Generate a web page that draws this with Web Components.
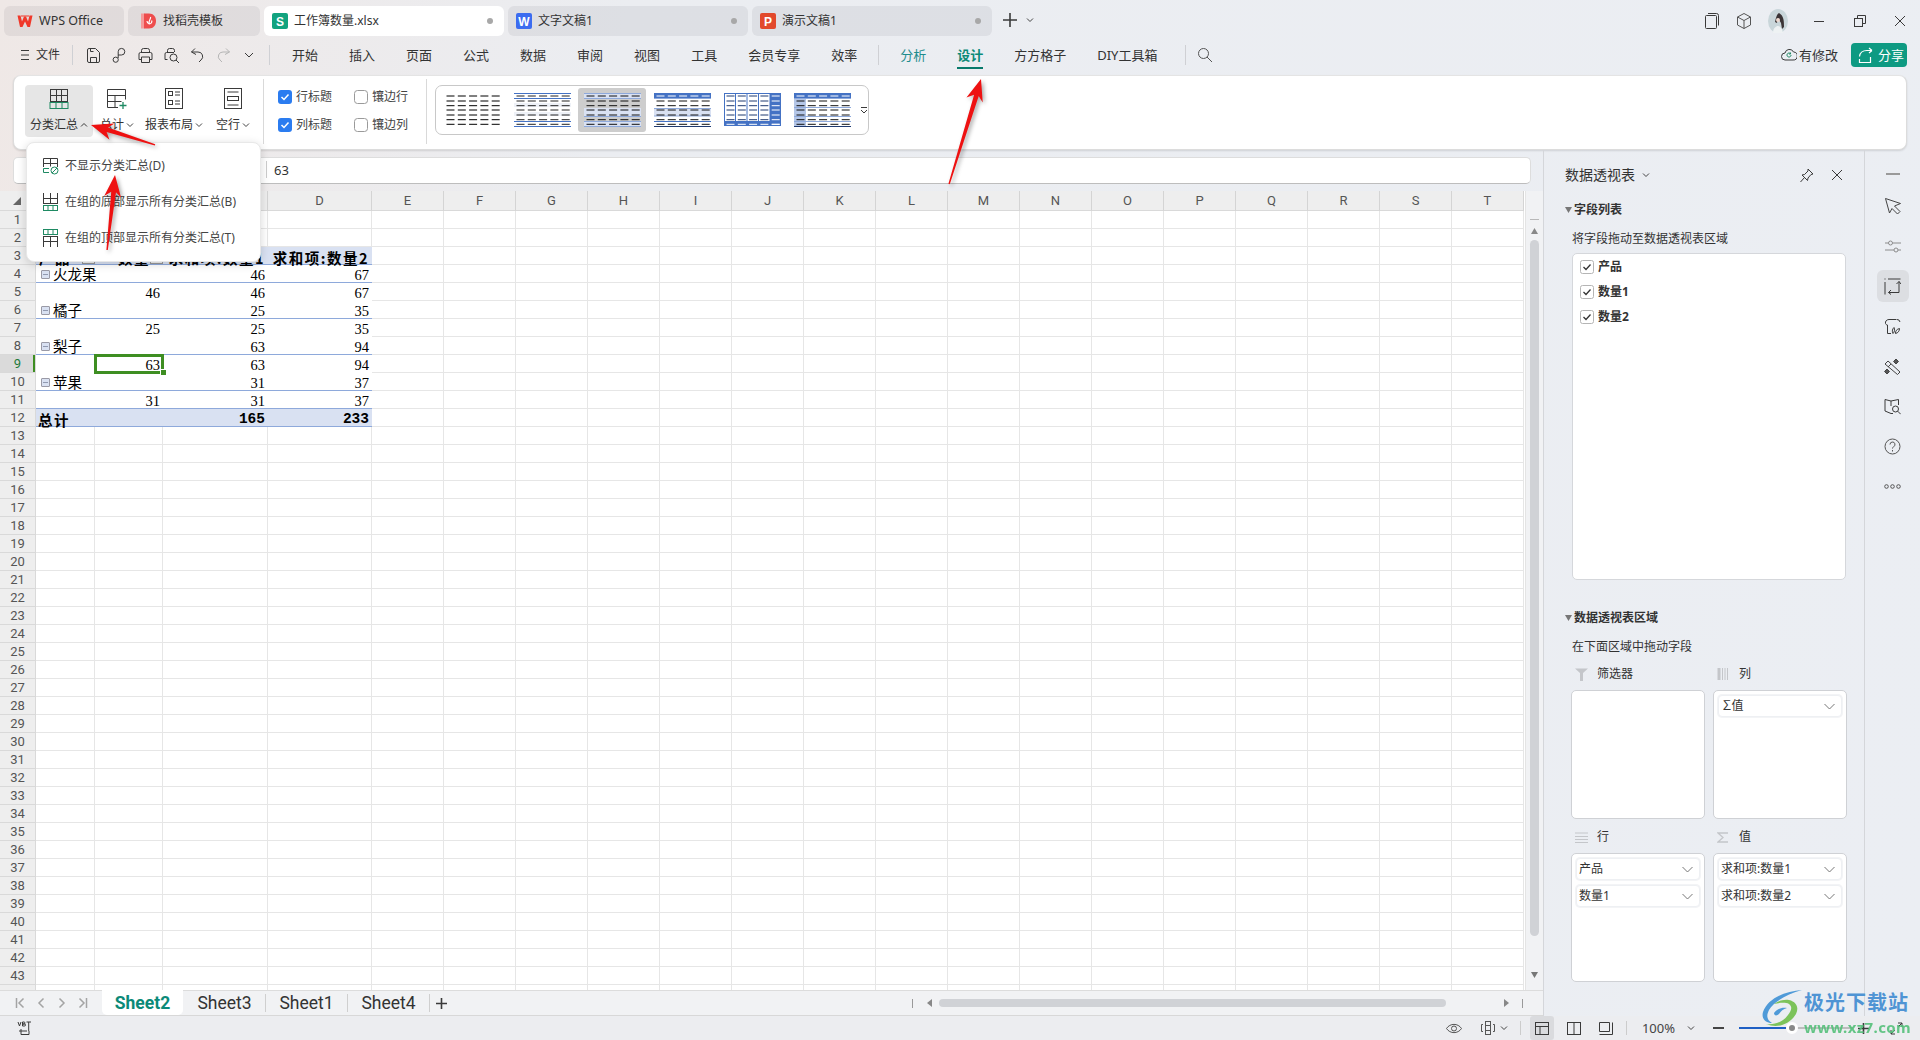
<!DOCTYPE html>
<html lang="zh">
<head>
<meta charset="utf-8">
<title>工作簿数量.xlsx</title>
<style>
  html, body { margin: 0; padding: 0; }
  body {
    width: 1920px;
    height: 1040px;
    overflow: hidden;
    position: relative;
    display: flex;
    flex-direction: column;
    font-family: "Noto Sans", "Noto Sans CJK SC", sans-serif;
    font-size: 12px;
    line-height: 16px;
    color: #333;
    background: linear-gradient(100deg, #efe8e6 0, #ebedf1 30%, #ebeef3 100%);
  }
  .work { display: flex; flex: 1; min-height: 0; }
  .left { display: flex; flex-direction: column; width: 1543px; }
</style>
</head>
<body>
<title-bar></title-bar>
<menu-bar></menu-bar>
<design-ribbon></design-ribbon>
<div class="work">
  <div class="left">
    <formula-bar></formula-bar>
    <sheet-grid></sheet-grid>
    <sheet-tabs></sheet-tabs>
  </div>
  <pivot-panel></pivot-panel>
  <side-rail></side-rail>
</div>
<status-bar></status-bar>
<subtotal-menu></subtotal-menu>
<red-arrows></red-arrows>
<water-mark></water-mark>

<script>
// small svg helper, everything is 1px line icons
function ic(w, h, body, color) {
  return `<svg width="${w}" height="${h}" viewBox="0 0 ${w} ${h}" fill="none" stroke="${color || '#3a3a3a'}" stroke-width="1" style="display:block;flex:none">${body}</svg>`;
}
const chev = (c) => ic(8, 6, '<path d="M1 1.500l3 3 3-3"/>', c || '#444');
const GREEN = '#1f8a63';

class DocTab extends HTMLElement {
  constructor() {
    super();
    const shadowRoot = this.attachShadow({ mode: 'open' });
    const active = this.hasAttribute('active');
    const w = this.getAttribute('w');
    const pad = this.getAttribute('pad') || 7;
    const dot = this.hasAttribute('dot') ? '<span class="dot"></span>' : '';
    shadowRoot.innerHTML = `
      <style>
        :host { display: flex; align-items: center; height: 30px; width: ${w}px; box-sizing: border-box;
          padding: 0 11px 0 ${pad}px; border-radius: 6px; background: ${active ? '#fff' : 'rgba(60,60,70,.075)'}; }
        .logo { width: 18px; height: 18px; margin-right: 5px; flex: none; }
        .t { flex: 1; white-space: nowrap; font-size: ${this.getAttribute('fs') || 12}px; color: #333; }
        .dot { width: 6px; height: 6px; border-radius: 50%; background: #a8a8a8; }
      </style>
      <span class="logo"><slot name="logo"></slot></span><span class="t"><slot></slot></span>${dot}`;
  }
}
customElements.define('doc-tab', DocTab);

class TitleBar extends HTMLElement {
  constructor() {
    super();
    const shadowRoot = this.attachShadow({ mode: 'open' });
    const letter = (bg, l) => `<svg slot="logo" width="18" height="18" viewBox="0 0 18 18"><rect x="1" y="1" width="16" height="16" rx="2" fill="${bg}"/><text x="9" y="14" font-family="Liberation Sans" font-size="12" font-weight="700" fill="#fff" text-anchor="middle">${l}</text></svg>`;
    shadowRoot.innerHTML = `
      <style>
        :host { display: flex; height: 40px; box-sizing: border-box; padding: 6px 0 4px 4px; gap: 4px; align-items: flex-start; }
        .plus { margin: 6px 0 0 6px; display: flex; align-items: center; gap: 8px; }
        .right { margin-left: auto; display: flex; align-items: center; height: 30px; }
        .right span { display: flex; justify-content: center; align-items: center; }
      </style>
      <doc-tab w="120" pad="12" fs="12.5"><svg slot="logo" width="18" height="18" viewBox="0 0 18 18"><path d="M1.500 3.500h3l1.500 6 2-5h2l2 5 1.500-6h3L14 15h-2.500L9 9.500 6.500 15H4z" fill="#f0382a"/><path d="M5 4h8" stroke="#f0382a" stroke-width="1"/></svg>WPS Office</doc-tab>
      <doc-tab w="132" pad="12"><svg slot="logo" width="18" height="18" viewBox="0 0 18 18"><path d="M1 1.500h3.500v15H1z" fill="#f59a9a"/><path d="M4 1.500h5c4.500 0 7 3.200 7 7.500s-2.500 7.500-7 7.500H4z" fill="#ee4d4d"/><path d="M10.500 5c.8 2-2.500 3.500-1.200 7 2 0 3-2 2.300-3.500M7 9c0 1.500.8 2.500 2.300 3" stroke="#fff" stroke-width="1.200" fill="none"/></svg>找稻壳模板</doc-tab>
      <doc-tab w="240" active dot>${letter('#12a37f', 'S')}工作簿数量.xlsx</doc-tab>
      <doc-tab w="240" dot>${letter('#3c6cf0', 'W')}文字文稿1</doc-tab>
      <doc-tab w="240" dot>${letter('#e2492c', 'P')}演示文稿1</doc-tab>
      <div class="plus">
        ${ic(16, 16, '<path d="M8 1v14M1 8h14" stroke-width="1.600"/>')}
        ${chev()}
      </div>
      <div class="right">
        <span style="width:32px">${ic(16, 18, '<rect x="1.500" y="3.500" width="11" height="13" rx="1"/><path d="M4 1.500h8.500a2 2 0 0 1 2 2v10"/>')}</span>
        <span style="width:32px">${ic(16, 18, '<path d="M8 1.500l6.500 3.500v8L8 16.500 1.500 13V5zM1.500 5L8 8.500 14.500 5M8 8.500v8"/>', '#555')}</span>
        <span style="width:36px"><svg width="20" height="24" viewBox="0 0 20 24"><ellipse cx="10" cy="12" rx="10" ry="12" fill="#c9d6da"/><path d="M11 4c-3 2-3 6-4 9l2 1 1-5 3 5 1 6 2-2c0-6 0-11-5-14z" fill="#3b3436"/><circle cx="10" cy="11" r="2" fill="#eed9cf"/><path d="M5 24c0-5 3-7 5-7s4 2 5 7z" fill="#eef2f3"/></svg></span>
        <span style="width:46px">${ic(12, 12, '<path d="M1 6.500h10"/>')}</span>
        <span style="width:36px">${ic(14, 14, '<rect x="1.500" y="4.500" width="8" height="8"/><path d="M4.500 4.500v-3h8v8h-3"/>')}</span>
        <span style="width:44px;margin-right:-2px">${ic(12, 12, '<path d="M1 1l10 10M11 1L1 11"/>')}</span>
      </div>`;
  }
}
customElements.define('title-bar', TitleBar);

class MenuBar extends HTMLElement {
  constructor() {
    super();
    const shadowRoot = this.attachShadow({ mode: 'open' });
    const tools = [
      '<path d="M4 1.500h6.500l4 4v8.500a1.500 1.500 0 0 1-1.500 1.500H4A1.500 1.500 0 0 1 2.500 14V3A1.500 1.500 0 0 1 4 1.500zM5.500 15.500v-5h6v5M5.500 1.500v3h3"/>',
      '<path d="M7 8h3.500a3.300 3.300 0 1 0-3.300-3.300V11"/><circle cx="4.700" cy="12.700" r="2.600"/>',
      '<path d="M4.500 5.500v-2a2 2 0 0 1 2-2h4a2 2 0 0 1 2 2v2M4.500 12.500H2V7a1.500 1.500 0 0 1 1.500-1.500h10A1.500 1.500 0 0 1 15 7v5.500h-2.500M4.500 10h8v5.500h-8z"/>',
      '<path d="M4.500 5V3.500a2 2 0 0 1 2-2h3a2 2 0 0 1 2 2V5M4.500 12.500H2V7a1.500 1.500 0 0 1 1.500-1.500H11"/><circle cx="10.500" cy="10.500" r="3.500"/><path d="M13 13l3 3"/>',
      '<path d="M6 1.500L2.500 5 7 7.500M2.500 5H9a4.500 4.500 0 0 1 3 8l-2 2"/>',
      '<path d="M11 1.500L14.500 5 10 7.500M14.500 5H8a4.500 4.500 0 0 0-3 8l2 2"/>',
    ];
    const names = ['开始', '插入', '页面', '公式', '数据', '审阅', '视图', '工具', '会员专享', '效率'];
    shadowRoot.innerHTML = `
      <style>
        :host { display: flex; align-items: center; height: 35px; box-sizing: border-box; padding-bottom: 5px; font-size: 13px; white-space: nowrap; }
        .ham { margin-left: 20px; width: 16px; }
        .sep { width: 1px; height: 20px; background: #cfd0d4; flex: none; }
        .tool { width: 26px; display: flex; justify-content: center; }
        .tabs { display: flex; gap: 31px; }
        a { color: #333; position: relative; display: block; }
        a.on { color: #0b8a78; font-weight: 700; }
        a.on::after { content: ''; position: absolute; left: 0; right: 0; bottom: -6px; height: 2px; background: #087a6b; }
        .right { margin-left: auto; display: flex; align-items: center; margin-right: 13px; }
        .share { display: flex; align-items: center; gap: 4px; height: 24px; width: 56px; box-sizing: border-box; padding-left: 6px;
          background: #0e9a82; color: #fff; border-radius: 4px; margin-left: 11px; }
      </style>
      <span class="ham">${ic(10, 12, '<path d="M1 1.500h8M1 6h8M1 10.500h8"/>')}</span>
      <span style="font-size:12px">文件</span>
      <span class="sep" style="margin:0 7px 0 12px"></span>
      ${tools.map((t, i) => `<span class="tool">${ic(17, 17, t, i === 5 ? '#b5b5b5' : '#3a3a3a')}</span>`).join('')}
      <span class="tool">${ic(10, 7, '<path d="M1 1l4 4 4-4"/>')}</span>
      <span class="sep" style="margin:0 22px 0 7px"></span>
      <div class="tabs">${names.map(n => `<a>${n}</a>`).join('')}</div>
      <span class="sep" style="margin:0 21px"></span>
      <a style="color:#1f8c8c">分析</a>
      <a class="on" style="margin-left:31px">设计</a>
      <a style="margin-left:31px">方方格子</a>
      <a style="margin-left:31px">DIY工具箱</a>
      <span class="sep" style="margin:0 11px 0 28px"></span>
      ${ic(16, 16, '<circle cx="6.500" cy="6.500" r="5"/><path d="M10 10l5 5"/>', '#555')}
      <div class="right">
        ${ic(16, 16, '<path d="M4 13a3.500 3.500 0 0 1 0-7 4.500 4.500 0 0 1 8.500-1A4 4 0 0 1 12 13z"/><path d="M10 8a2 2 0 1 1-.6-1.400M9.500 5.500v1.500H8" stroke="' + GREEN + '"/>')}
        <span style="margin-left:2px">有修改</span>
        <span class="share" style="margin-left:13px">${ic(17, 17, '<path d="M10 3.500h5M15 3.500l-3-2.500M15 3.500l-3 2.500M10 3.500c-4 0-7 2-7.500 6M2.500 12v3.500h11V10" stroke="#fff" stroke-width="1.200"/>', '#fff')}分享</span>
      </div>`;
  }
}
customElements.define('menu-bar', MenuBar);

class RibbonBtn extends HTMLElement {
  constructor() {
    super();
    const shadowRoot = this.attachShadow({ mode: 'open' });
    const open = this.hasAttribute('open');
    shadowRoot.innerHTML = `
      <style>
        :host { display: flex; flex-direction: column; align-items: center; width: ${this.getAttribute('w')}px; height: 52px; box-sizing: border-box;
          padding-top: 3px; border-radius: 4px; flex: none; background: ${open ? '#e6e6e6' : 'transparent'}; }
        .i { height: 21px; }
        .l { display: flex; align-items: center; gap: 2px; margin-top: 8px; height: 16px; white-space: nowrap; }
      </style>
      <div class="i"><slot name="i"></slot></div>
      <div class="l"><slot></slot>${open ? ic(8, 6, '<path d="M1 4.500l3-3 3 3"/>') : chev()}</div>`;
  }
}
customElements.define('ribbon-btn', RibbonBtn);

class StyleGallery extends HTMLElement {
  constructor() {
    super();
    const shadowRoot = this.attachShadow({ mode: 'open' });
    const B = '#4472c4', L = '#8ea9db', P = '#d9e1f2', N = '#1f3a70';
    const ys = [3, 8, 12.7, 17, 22, 26.7, 31.3];
    const dashes = (col, from, cols, to) => {
      let s = '';
      ys.forEach((y, r) => {
        if (r < (from || 0) || r > (to === undefined ? 6 : to)) return;
        for (let i = 0; i < 5; i++) {
          if (cols && !cols.includes(i)) continue;
          s += `<path d="M${2.5 + i * 11.3} ${y}h8" stroke="${col}"/>`;
        }
      });
      return s;
    };
    const hl = (y, c) => `<path d="M0 ${y}h57" stroke="${c}"/>`;
    const box = (x, y, w, h, c) => `<rect x="${x}" y="${y}" width="${w}" height="${h}" fill="${c}"/>`;
    const items = [
      dashes('#000'),
      hl(.5, B) + hl(5.5, B) + box(0, 10, 57, 4, '#eef1f7') + box(0, 19, 57, 4, '#eef1f7') + hl(28.5, B) + hl(33.5, B) + dashes('#222'),
      box(0, 0, 57, 6, P) + box(0, 15, 57, 8, P) + box(0, 28, 57, 6, P) + hl(.5, L) + hl(5.5, L) + hl(23.5, L) + hl(28.5, L) + hl(33.5, L) + dashes('#111'),
      box(0, 0, 57, 5, B) + box(0, 15, 57, 8, P) + hl(5.5, L) + hl(15.5, L) + hl(23, L) + hl(28.5, B) + hl(33.5, N) + dashes('#fff', 0, null, 0) + dashes('#111', 1),
      `<rect x=".5" y=".5" width="56" height="32" fill="#fff" stroke="${B}"/>` + box(46, 0, 11, 33, B) + box(0, 28, 57, 5, B) + [11.5, 23, 34.5, 46].map(x => `<path d="M${x} 0v28" stroke="${B}"/>`).join('') + dashes(N, 0, [0, 1, 2, 3], 5) + dashes('#fff', 0, [4]) + dashes('#fff', 6),
      box(0, 0, 12, 33, '#b4c6e7') + box(0, 0, 57, 5, B) + hl(5.5, L) + hl(14.5, L) + hl(23.5, L) + hl(28.5, L) + hl(33.5, N) + dashes('#fff', 0, null, 0) + dashes('#111', 1),
    ];
    shadowRoot.innerHTML = `
      <style>
        :host { display: flex; align-items: center; width: 434px; height: 50px; box-sizing: border-box; padding-left: 2px;
          border: 1px solid #c8c8c8; border-radius: 7px; flex: none; margin-top: -2px; }
        .it { width: 68px; height: 44px; border-radius: 3px; margin-right: 2px; display: flex; align-items: center; justify-content: center; flex: none; }
        .it.sel { background: #cdcdcd; }
        .more { margin-left: 2px; }
      </style>
      ${items.map((s, i) => `<div class="it ${i === 2 ? 'sel' : ''}"><svg width="57" height="34" viewBox="0 0 57 34" stroke-width="1">${s}</svg></div>`).join('')}
      <div class="more">${ic(8, 9, '<path d="M1 1.500h6M1 4l3 3 3-3"/>')}</div>`;
  }
}
customElements.define('style-gallery', StyleGallery);

class DesignRibbon extends HTMLElement {
  constructor() {
    super();
    const shadowRoot = this.attachShadow({ mode: 'open' });
    const grn = GREEN;
    const check = (label, on) => `
      <label>${on
        ? '<svg width="14" height="14" viewBox="0 0 14 14"><rect width="14" height="14" rx="3" fill="#2b7cf0"/><path d="M3.500 7l2.500 2.500 4.500-5" fill="none" stroke="#fff" stroke-width="1.500"/></svg>'
        : '<svg width="14" height="14" viewBox="0 0 14 14"><rect x=".5" y=".5" width="13" height="13" rx="3" fill="#fff" stroke="#9a9a9a"/></svg>'}<span>${label}</span></label>`;
    shadowRoot.innerHTML = `
      <style>
        :host { display: flex; align-items: center; height: 75px; margin: 0 13px; box-sizing: border-box; padding: 0 0 3px 11px;
          background: #fff; border: 1px solid #dcdcdc; border-top-color: #e4e4e4; border-radius: 8px; box-shadow: 0 1px 2px rgba(0,0,0,.12); }
        .sep { width: 1px; height: 65px; background: #d9d9d9; flex: none; }
        .checks { display: grid; grid-template-columns: 76px 76px; grid-auto-rows: 28px; margin-left: 14px; align-items: center; }
        label { display: flex; align-items: center; gap: 4px; color: #444; white-space: nowrap; }
      </style>
      <ribbon-btn w="68" open>
        <span slot="i">${ic(20, 21, `<path d="M1.500 1v13M7.500 1v13M12.500 1v13M18.500 1v13M1.500 1.500h17M1.500 7.500h17M1 13.500h18"/><rect x="1" y="14.500" width="18" height="6" stroke="${grn}"/><path d="M7 14.500v6M13 14.500v6" stroke="${grn}"/>`)}</span>分类汇总</ribbon-btn>
      <ribbon-btn w="44" style="margin-left:2px">
        <span slot="i">${ic(22, 21, `<path d="M12 19.500H1.500v-18h18v10M1.500 7.500h18M1.500 13.500h14M9 7.500v12"/><path d="M17 14v7M13.500 17.500h7" stroke="${grn}" stroke-width="1.300"/>`)}</span>总计</ribbon-btn>
      <ribbon-btn w="70">
        <span slot="i">${ic(18, 21, '<rect x=".5" y=".5" width="17" height="20"/><rect x="3.500" y="3.500" width="4" height="4"/><rect x="3.500" y="12.500" width="4" height="4"/><path d="M10 4h5M10 7h5M10 13h5M10 16h5"/>')}</span>报表布局</ribbon-btn>
      <ribbon-btn w="44" style="margin-left:2px">
        <span slot="i">${ic(18, 21, '<rect x=".5" y=".5" width="17" height="20"/><path d="M3.500 4h11M3.500 17h11"/><rect x="3.500" y="8.500" width="11" height="4"/>')}</span>空行</ribbon-btn>
      <span class="sep" style="margin-left:8px"></span>
      <div class="checks">${check('行标题', true)}${check('镶边行', false)}${check('列标题', true)}${check('镶边列', false)}</div>
      <span class="sep" style="margin-left:-4px"></span>
      <style-gallery style="margin-left:8px"></style-gallery>`;
  }
}
customElements.define('design-ribbon', DesignRibbon);

class SubtotalMenu extends HTMLElement {
  constructor() {
    super();
    const shadowRoot = this.attachShadow({ mode: 'open' });
    const g = GREEN;
    const icons = [
      `<path d="M1.500 10V1.500h14V10M1.500 6.500h14M8.500 1.500v8"/><path d="M7 15.500H1.500v-4H7" stroke="${g}"/><circle cx="12.500" cy="13.500" r="3.500" stroke="${g}"/><path d="M10 16l5-5" stroke="${g}"/>`,
      `<path d="M1.500 0v10M8.500 0v10M15.500 0v10M1 5.500h15M1 10.500h15"/><rect x="1.500" y="12.500" width="14" height="5" stroke="${g}"/><path d="M6 12.500v5M11 12.500v5" stroke="${g}"/>`,
      `<rect x="1.500" y=".5" width="14" height="5" stroke="${g}"/><path d="M6 .5v5M11 .5v5" stroke="${g}"/><path d="M1.500 7v11M8.500 7v11M15.500 7v11M1 7.500h15M1 12.500h15"/>`,
    ];
    const labels = ['不显示分类汇总(D)', '在组的底部显示所有分类汇总(B)', '在组的顶部显示所有分类汇总(T)'];
    shadowRoot.innerHTML = `
      <style>
        :host { position: absolute; left: 26px; top: 142px; width: 235px; height: 120px; box-sizing: border-box; padding: 5px 0;
          display: flex; flex-direction: column; background: #fff; border: 1px solid #e8e8e8; border-radius: 8px; box-shadow: 0 2px 10px rgba(0,0,0,.16); }
        .row { display: flex; align-items: center; height: 36px; padding-left: 15px; gap: 6px; white-space: nowrap; color: #444; }
      </style>
      ${labels.map((l, i) => `<div class="row">${ic(17, 18, icons[i])}<span>${l}</span></div>`).join('')}`;
  }
}
customElements.define('subtotal-menu', SubtotalMenu);

class FormulaBar extends HTMLElement {
  constructor() {
    super();
    const shadowRoot = this.attachShadow({ mode: 'open' });
    shadowRoot.innerHTML = `
      <style>
        :host { display: flex; align-items: center; height: 27px; margin: 7px 12px 7px 13px; box-sizing: border-box; padding: 0 0 2px 252px;
          background: #fff; border: 1px solid #dddddd; border-bottom-color: #bdbdbd; border-radius: 5px; flex: none; }
        .sep { width: 1px; height: 17px; background: #ccc; margin-right: 7px; }
        span.v { font: 13px "Noto Sans", sans-serif; }
      </style>
      <span class="sep"></span><span class="v">63</span>`;
  }
}
customElements.define('formula-bar', FormulaBar);

class SheetGrid extends HTMLElement {
  constructor() {
    super();
    const shadowRoot = this.attachShadow({ mode: 'open' });
    const cols = 'ABCDEFGHIJKLMNOPQRST'.split('');
    const widths = [59, 68, 105, 104].concat(Array(16).fill(72));
    const tmpl = `36px ${widths.map(w => w + 'px').join(' ')}`;

    const minus = '<i class="box"></i>';
    const data = {
      3: ['<b class="z" style="margin-left:3px">产品</b><i class="drop"></i>', '<b class="z" style="margin-left:2px">数量1</b><i class="drop"></i>', '<b class="z" style="margin-left:2px">求和项:数量1</b>', '<b class="z">求和项:数量2</b>'],
      4: [minus + '火龙果', '', '46', '67'],
      5: ['', '46', '46', '67'],
      6: [minus + '橘子', '', '25', '35'],
      7: ['', '25', '25', '35'],
      8: [minus + '梨子', '', '63', '94'],
      9: ['', '63', '63', '94'],
      10: [minus + '苹果', '', '31', '37'],
      11: ['', '31', '31', '37'],
      12: ['<b class="z">总计</b>', '', '<b class="n">165</b>', '<b class="n">233</b>'],
    };
    const underlined = [3, 4, 6, 8, 10, 11, 12];

    let html = `<div class="hc corner"><svg width="8" height="8" viewBox="0 0 8 8"><path d="M8 0v8H0z" fill="#666"/></svg></div>`;
    // A, B and C sit behind the open dropdown
    cols.forEach((c, i) => { html += `<div class="hc">${i > 2 ? c : ''}</div>`; });
    for (let r = 1; r <= 44; r++) {
      html += `<div class="rh ${r === 9 ? 'cur' : ''}">${r < 44 ? r : ''}</div>`;
      for (let c = 0; c < 20; c++) {
        const row = data[r];
        const inTable = row && c < 4;
        let cls = 'c';
        if (inTable) {
          cls += ' t';
          if (r === 3 || r === 12) cls += ' head';
          if (underlined.includes(r)) cls += ' ul';
          if (c > 0) cls += ' num';
        }
        if (r === 9 && c === 1) cls += ' sel';
        html += `<div class="${cls}">${inTable ? row[c] : ''}</div>`;
      }
    }

    shadowRoot.innerHTML = `
      <style>
        :host { display: flex; flex: 1; min-height: 0; overflow: hidden; background: #fff; }
        .g { display: grid; grid-template-columns: ${tmpl}; grid-template-rows: 20px repeat(44, 18px); width: 1525px; flex: none; align-content: start;
          font-family: "Liberation Serif", "Noto Sans CJK SC", serif; font-size: 14.5px; color: #000; }
        .hc, .rh { display: flex; align-items: center; justify-content: center; background: #eeeeee; color: #555; box-sizing: border-box;
          font: 13px/1 Roboto, sans-serif; border-right: 1px solid #d9d9d9; border-bottom: 1px solid #d9d9d9; }
        .hc { border-right-color: #d4d4d4; }
        .corner { justify-content: flex-end; align-items: flex-end; padding: 0 14px 5px 0; }
        .rh.cur { background: #dadada; color: #1f7a3a; box-shadow: inset -2px 0 0 #3e8e22; }
        .c { border-right: 1px solid #e6e6e6; border-bottom: 1px solid #e6e6e6; box-sizing: border-box; white-space: nowrap; position: relative; min-width: 0; }
        .c.t { border-right: 0; border-bottom-color: #fff; display: flex; align-items: center; padding-top: 4px; line-height: 13px; }
        .c.num { justify-content: flex-end; padding-right: 3px; }
        .c.head { background: #d9e1f2; }
        .c.ul { border-bottom-color: #8ea9db; }
        .c.sel { outline: 3px solid #3e8e22; outline-offset: -2px; z-index: 2; overflow: visible; }
        .c.sel::after { content: ''; position: absolute; right: -3px; bottom: -3px; width: 5px; height: 5px; background: #3e8e22; border: 1px solid #fff; box-sizing: content-box; margin: -1px; }
        .box { display: inline-block; width: 9px; height: 9px; margin: -3px 3px 0 5px; box-sizing: border-box; border: 1px solid #9a9aa6; border-radius: 1px; background: linear-gradient(#9099b0,#9099b0) center/5px 1px no-repeat #d9e1f2; flex: none; }
        .drop { display: block; width: 13px; height: 16px; border: 1px solid #999; background: #eee; box-sizing: border-box; position: absolute; right: 0; top: 1px; }
        b.z { font-family: "Noto Sans CJK SC", sans-serif; font-weight: 700; letter-spacing: 1.5px; margin-left: 2px; line-height: 13px; }
        .num b.z { margin-left: 0; }
        b.n { font-family: "Liberation Mono", monospace; font-weight: 700; }
        .v { width: 18px; flex: none; box-sizing: border-box; background: #f1f2f4; display: flex; flex-direction: column; align-items: center; border-left: 1px solid #e4e4e4; }
        .dash { width: 9px; height: 1px; background: #b8b8b8; margin-top: 28px; }
        .thumb { width: 9px; height: 696px; border-radius: 5px; background: #d0d2d6; margin-top: 6px; flex: none; }
      </style>
      <div class="g">${html}</div>
      <div class="v">
        <span class="dash"></span>
        <svg style="margin-top:8px" width="7" height="6" viewBox="0 0 7 6"><path d="M3.500 0l3.500 6H0z" fill="#888"/></svg>
        <span class="thumb"></span>
        <svg style="margin-top:36px" width="7" height="6" viewBox="0 0 7 6"><path d="M3.500 6L7 0H0z" fill="#777"/></svg>
      </div>`;
  }
}
customElements.define('sheet-grid', SheetGrid);

class SheetTabs extends HTMLElement {
  constructor() {
    super();
    const shadowRoot = this.attachShadow({ mode: 'open' });
    const c = '#a4a4a4';
    shadowRoot.innerHTML = `
      <style>
        :host { display: flex; align-items: center; height: 26px; box-sizing: border-box; background: #f1f2f4; border-top: 1px solid #dcdcdc; border-bottom: 1px solid #d8d8d8; flex: none; font: 17.5px/24px Roboto, "Noto Sans", sans-serif; color: #333; }
        .nav { display: flex; width: 102px; padding-left: 9px; box-sizing: border-box; align-items: center; }
        .nav span { width: 21px; display: flex; justify-content: center; }
        .on { width: 81px; height: 25px; margin-top: -1px; background: #fff; border-radius: 0 0 5px 5px; color: #0b8a78; font-weight: 700; display: flex; justify-content: center; align-items: center; margin-right: 14px; }
        .t { width: 55px; text-align: center; }
        .sep { width: 1px; height: 18px; background: #cfcfcf; margin: 0 13px; }
        .h { margin-left: auto; margin-right: 18px; width: 613px; display: flex; align-items: center; }
      </style>
      <div class="nav">
        <span>${ic(10, 12, '<path d="M1.500 1v10M8.500 1.500L4 6l4.500 4.500" stroke-width="1.500"/>', c)}</span>
        <span>${ic(8, 12, '<path d="M6.500 1.500L2 6l4.500 4.500" stroke-width="1.500"/>', c)}</span>
        <span>${ic(8, 12, '<path d="M1.500 1.500L6 6l-4.500 4.500" stroke-width="1.500"/>', c)}</span>
        <span>${ic(10, 12, '<path d="M8.500 1v10M1.500 1.500L6 6l-4.500 4.500" stroke-width="1.500"/>', c)}</span>
      </div>
      <div class="on">Sheet2</div>
      <div class="t">Sheet3</div><span class="sep"></span>
      <div class="t">Sheet1</div><span class="sep"></span>
      <div class="t">Sheet4</div><span class="sep" style="margin-right:6px"></span>
      ${ic(11, 11, '<path d="M5.500 0v11M0 5.500h11" stroke-width="1.600"/>')}
      <div class="h">
        <span style="width:1px;height:9px;background:#999;margin-right:14px"></span>
        <svg width="5" height="8" viewBox="0 0 5 8"><path d="M5 0v8L0 4z" fill="#888"/></svg>
        <span style="width:507px;height:8px;background:#d0d2d6;border-radius:4px;margin:0 58px 0 7px"></span>
        <svg width="5" height="8" viewBox="0 0 5 8"><path d="M0 0v8l5-4z" fill="#888"/></svg>
        <span style="width:1px;height:9px;background:#999;margin-left:13px"></span>
      </div>`;
  }
}
customElements.define('sheet-tabs', SheetTabs);

class FieldChip extends HTMLElement {
  constructor() {
    super();
    const shadowRoot = this.attachShadow({ mode: 'open' });
    shadowRoot.innerHTML = `
      <style>
        :host { display: flex; align-items: center; justify-content: space-between; height: 22px; box-sizing: border-box; padding: 0 6px 0 2px;
          border: 1px solid #eef0f3; box-shadow: 0 0 0 1px #f3f4f6; border-radius: 4px; background: #fff; white-space: nowrap; color: #333; }
      </style>
      <span><slot></slot></span>${ic(11, 7, '<path d="M.5 1l5 5 5-5"/>', '#777')}`;
  }
}
customElements.define('field-chip', FieldChip);

class DropZone extends HTMLElement {
  constructor() {
    super();
    const shadowRoot = this.attachShadow({ mode: 'open' });
    shadowRoot.innerHTML = `
      <style>
        :host { display: flex; flex-direction: column; gap: 5px; height: 129px; box-sizing: border-box; padding: 4px 4px;
          background: #fff; border: 1px solid #cfd1d5; border-radius: 5px; }
      </style>
      <slot></slot>`;
  }
}
customElements.define('drop-zone', DropZone);

class PivotPanel extends HTMLElement {
  constructor() {
    super();
    const shadowRoot = this.attachShadow({ mode: 'open' });
    const tri = '<svg width="7" height="6" viewBox="0 0 7 6"><path d="M0 0h7L3.500 6z" fill="#777"/></svg>';
    const field = (n) => `<div class="f"><svg width="14" height="14" viewBox="0 0 14 14"><rect x=".5" y=".5" width="13" height="13" rx="2" fill="#fff" stroke="#b5b5b5"/><path d="M3.500 7l2.500 2.500 4.500-5" fill="none" stroke="#333" stroke-width="1.300"/></svg><b>${n}</b></div>`;
    const g = '#c4c6ca';
    shadowRoot.innerHTML = `
      <style>
        :host { display: block; width: 322px; flex: none; box-sizing: border-box; border-left: 1px solid #d4d6da; border-right: 1px solid #d4d6da; padding-left: 21px; color: #333; }
        .title { display: flex; align-items: center; height: 50px; font-size: 14px; gap: 7px; }
        .title .r { margin-left: auto; display: flex; gap: 17px; margin-right: 21px; align-items: center; }
        .sec { display: flex; align-items: center; height: 20px; gap: 2px; font-weight: 700; }
        .hint { height: 20px; line-height: 20px; margin: 9px 0 0 7px; }
        .list { margin: 4px 0 0 7px; width: 274px; height: 327px; box-sizing: border-box; background: #fff; border: 1px solid #d5d7db; border-radius: 5px; padding: 0 0 0 7px; }
        .f { display: flex; align-items: center; gap: 4px; height: 25px; }
        .f b { font-weight: 700; }
        .areas { display: grid; grid-template-columns: 134px 134px; column-gap: 8px; margin: 7px 0 0 6px; }
        .lab { display: flex; align-items: center; height: 20px; margin-bottom: 6px; padding-left: 4px; }
        .lab .g { width: 22px; display: flex; justify-content: flex-start; }
        .gap { margin-top: 8px; }
      </style>
      <div class="title">数据透视表 ${chev()}
        <div class="r">
          ${ic(15, 15, '<path d="M9 1l5 5-2 .5L9 10l-.5 2.500-5.500-5.500 2.500-.5L9 3zM5.500 9.500L1.500 14"/>')}
          ${ic(12, 12, '<path d="M1 1l10 10M11 1L1 11"/>')}
        </div>
      </div>
      <div class="sec">${tri}<span>字段列表</span></div>
      <div class="hint">将字段拖动至数据透视表区域</div>
      <div class="list">${field('产品')}${field('数量1')}${field('数量2')}</div>
      <div class="sec" style="margin-top:28px">${tri}<span>数据透视表区域</span></div>
      <div class="hint">在下面区域中拖动字段</div>
      <div class="areas">
        <div>
          <div class="lab"><span class="g">${ic(13, 14, `<path d="M0 1.500h13L8 6v8H5V6z" fill="${g}" stroke="none"/>`)}</span>筛选器</div>
          <drop-zone></drop-zone>
        </div>
        <div>
          <div class="lab"><span class="g">${ic(11, 12, `<path d="M1 0v12h2V0zM5.500 0v12M8 0v12M10.500 0v12" fill="${g}" stroke="${g}"/>`)}</span>列</div>
          <drop-zone><field-chip><span style="letter-spacing:-1.5px">∑值</span></field-chip></drop-zone>
        </div>
        <div class="gap">
          <div class="lab"><span class="g">${ic(13, 11, `<path d="M0 1h13M0 4.500h13M0 7.500h13M0 10.500h13" stroke="${g}"/>`)}</span>行</div>
          <drop-zone><field-chip>产品</field-chip><field-chip>数量1</field-chip></drop-zone>
        </div>
        <div class="gap">
          <div class="lab"><span class="g">${ic(12, 11, `<path d="M11 1H1l5 4.500L1 10h10" stroke="${g}" stroke-width="1.300"/>`)}</span>值</div>
          <drop-zone><field-chip>求和项:数量1</field-chip><field-chip>求和项:数量2</field-chip></drop-zone>
        </div>
      </div>`;
  }
}
customElements.define('pivot-panel', PivotPanel);

class SideRail extends HTMLElement {
  constructor() {
    super();
    const shadowRoot = this.attachShadow({ mode: 'open' });
    const item = (h, body, cls) => `<div class="b ${cls || ''}" style="height:${h}px">${body}</div>`;
    shadowRoot.innerHTML = `
      <style>
        :host { display: flex; flex-direction: column; align-items: center; flex: 1; padding-top: 8px; }
        .b { display: flex; align-items: center; justify-content: center; width: 32px; flex: none; border-radius: 6px; }
        .on { background: #dcdee2; }
      </style>
      ${item(32, '<span style="width:14px;height:2px;background:#9a9a9a"></span>')}
      ${item(32, ic(18, 18, '<path d="M1.500 1.500l15 5-6 2.500 5.500 5.500-2.500 2.500-5.500-5.500L5.500 16z"/>', '#444'))}
      ${item(48, ic(16, 14, '<path d="M0 4h3.500M7.500 4H16M0 11h9M13 11h3"/><circle cx="5.500" cy="4" r="2"/><circle cx="11" cy="11" r="2"/>', '#8c8c8c'))}
      ${item(32, ic(17, 17, '<path d="M1 .5v1M4 1h12.500M1 4v12.500M15 14.500V3.500M15 3.500l-2.500 2.500M15 3.500l2 2.500M15 14.500H4.500M4.500 14.500l2.500-2.500M4.500 14.500l2.500 2"/>'), 'on')}
      ${item(48, ic(17, 17, '<path d="M12.500 1.500H5C2.500 1.500 1 3.500 1.500 5.500 2 7 3.500 7 3.500 7v8.500H7M13 1.500a3 3 0 0 1 3 2.500"/><path d="M9 15.500c-1.200-2.500-.6-4.500 1-6 1 2 .6 4.500-1 6zM11.500 15.500c-.3-2.500 1.500-4.500 4-5 0 2.500-1.500 4.500-4 5z"/>'))}
      ${item(32, ic(17, 17, '<path d="M1 6l3-3 12 11-2.500 2.500zM4 9l3-3"/><path d="M12 1l2.500 2.500L12 6 9.500 3.500zM3 11l2.500 2.500L3 16 .5 13.500z" fill="#555"/>', '#444'))}
      ${item(48, ic(17, 17, '<path d="M1 1.500l6 1.500 7.500-1.500V7M1 1.500V13l6 2.500h2M7 3v5"/><circle cx="11.500" cy="11" r="3"/><path d="M13.700 13.200l3 3"/>'))}
      ${item(32, ic(17, 17, '<circle cx="8.500" cy="8.500" r="7.500"/><path d="M6 6.500a2.500 2.500 0 1 1 3.500 2.300c-.8.4-1 .9-1 1.700M8.500 12v1.500"/>', '#555'))}
      ${item(48, ic(17, 5, '<circle cx="2.500" cy="2.500" r="1.800"/><circle cx="8.500" cy="2.500" r="1.800"/><circle cx="14.500" cy="2.500" r="1.800"/>', '#555'))}`;
  }
}
customElements.define('side-rail', SideRail);

class StatusBar extends HTMLElement {
  constructor() {
    super();
    const shadowRoot = this.attachShadow({ mode: 'open' });
    shadowRoot.innerHTML = `
      <style>
        :host { display: flex; align-items: center; height: 24px; flex: none; box-sizing: border-box; background: #ecedf0; font-size: 13px; color: #444; white-space: nowrap; }
        .vb { margin-left: 17px; }
        .right { margin-left: auto; display: flex; align-items: center; height: 24px; }
        .sep { width: 1px; height: 14px; background: #ccc; }
        .view { width: 24px; height: 24px; display: flex; justify-content: center; align-items: center; border-radius: 3px; }
        .view.on { background: #dadbde; }
        .track { width: 114px; height: 2px; background: #bdbdbd; position: relative; }
        .fill { width: 47px; height: 2px; background: #1f5fc4; }
        .knob { position: absolute; left: 47px; top: -5px; width: 12px; height: 12px; border-radius: 50%; background: #888; box-sizing: border-box; border: 3px solid #fff; }
      </style>
      <span class="vb">${ic(15, 15, '<path d="M1 1l1.500 4L4 1M5.500 1v4h2a1 1 0 0 0 0-2h-2 1.500a1 1 0 0 0 0-2zM9.500 1H14M11.700 1v9M4 8v5.500h8V10M2 10h8"/>')}</span>
      <div class="right">
        ${ic(16, 11, '<path d="M.5 5.500C4 0 12 0 15.500 5.500 12 11 4 11 .5 5.500z"/><circle cx="8" cy="5.500" r="2.500"/>', '#555')}
        <span style="width:19px"></span>
        ${ic(14, 14, '<rect x="4.500" y=".5" width="5" height="4"/><rect x="4.500" y="9.500" width="5" height="4"/><rect x="4.500" y="4.500" width="5" height="5"/><path d="M2 3.500H.5v7H2M12 3.500h1.500v7H12"/>', '#555')}
        <span style="width:5px"></span>${chev()}
        <span class="sep" style="margin:0 9px 0 12px"></span>
        <span class="view on">${ic(14, 13, '<rect x=".5" y=".5" width="13" height="12"/><path d="M.5 4.500h13M5 4.500v8"/>')}</span>
        <span class="view" style="margin-left:8px">${ic(14, 13, '<rect x=".5" y=".5" width="13" height="12"/><path d="M7 .5v12"/>')}</span>
        <span class="view" style="margin-left:8px">${ic(14, 13, '<path d="M.5 12.500h13M13.500 .5v12M.5 .5h10v9H.5z"/>')}</span>
        <span class="sep" style="margin:0 15px 0 8px"></span>
        <span>100%</span>
        <span style="margin:0 18px 0 12px">${chev()}</span>
        <span style="width:11px;height:2px;background:#444"></span>
        <span class="track" style="margin-left:15px"><div class="fill"></div><div class="knob"></div></span>
        <span style="margin:0 21px 0 5px">${ic(11, 11, '<path d="M5.500 0v11M0 5.500h11" stroke-width="1.600"/>')}</span>
        ${ic(13, 13, '<path d="M8 1h4v4M12 1L8 5M5 12H1V8M1 12l4-4"/>')}
        <span style="width:17px"></span>
      </div>`;
  }
}
customElements.define('status-bar', StatusBar);

// annotation arrows sit on top of the whole window
class RedArrows extends HTMLElement {
  constructor() {
    super();
    const shadowRoot = this.attachShadow({ mode: 'open' });
    const arrow = (x1, y1, x2, y2) => {
      // tail at x1,y1 tip at x2,y2
      const a = Math.atan2(y2 - y1, x2 - x1), L = Math.hypot(x2 - x1, y2 - y1);
      const deg = a * 180 / Math.PI;
      return `<path transform="translate(${x1} ${y1}) rotate(${deg})" d="M0 -.6L${L - 17} -2L${L - 22} -8.500L${L} 0L${L - 22} 8.500L${L - 17} 2.800L0 .8z" fill="#ee1111"/>`;
    };
    shadowRoot.innerHTML = `
      <style>
        :host { position: absolute; left: 0; top: 0; width: 1920px; height: 1040px; pointer-events: none; display: block; }
        svg { display: block; filter: drop-shadow(2px 2px 2px rgba(0,0,0,.35)); }
      </style>
      <svg width="1920" height="1040">
        ${arrow(155, 145, 91, 125)}
        ${arrow(107, 250, 115, 175)}
        ${arrow(949, 184, 981, 79)}
      </svg>`;
  }
}
customElements.define('red-arrows', RedArrows);

class WaterMark extends HTMLElement {
  constructor() {
    super();
    const shadowRoot = this.attachShadow({ mode: 'open' });
    shadowRoot.innerHTML = `
      <style>
        :host { position: absolute; left: 1760px; top: 988px; width: 160px; height: 50px; display: block; pointer-events: none; }
        svg { position: absolute; left: 0; top: 0; }
        .a { position: absolute; left: 44px; top: 1px; font: 700 20px/26px "Noto Sans CJK SC", sans-serif; letter-spacing: 1px; color: #4f94d4; white-space: nowrap; }
        .b { position: absolute; left: 44px; top: 29px; font: 700 15px/20px "Noto Sans", sans-serif; color: #55c07a; letter-spacing: .4px; white-space: nowrap; opacity: .9; }
      </style>
      <svg width="44" height="44" viewBox="0 0 44 44">
        <path d="M42 2C26 3 8 10 3 24c-2 7 3 11 9 11-5-3-6-7-3-13C14 13 28 6 42 2z" fill="#4f9ad8"/>
        <path d="M6 36c12 5 24 0 30-10 3-6 1-12-7-14-5-1-11 1-15 4 5-1 11-2 15 0 4 3 2 7-1 11-5 7-13 10-22 9z" fill="#7cc35b"/>
        <path d="M14 25c3-4 8-6 13-5-4 1-6 3-8 6-2 2-5 2-5-1z" fill="#4f9ad8"/>
      </svg>
      <div class="a">极光下载站</div>
      <div class="b">www.xz7.com</div>
    `;
  }
}
customElements.define('water-mark', WaterMark);
</script>
</body>
</html>
